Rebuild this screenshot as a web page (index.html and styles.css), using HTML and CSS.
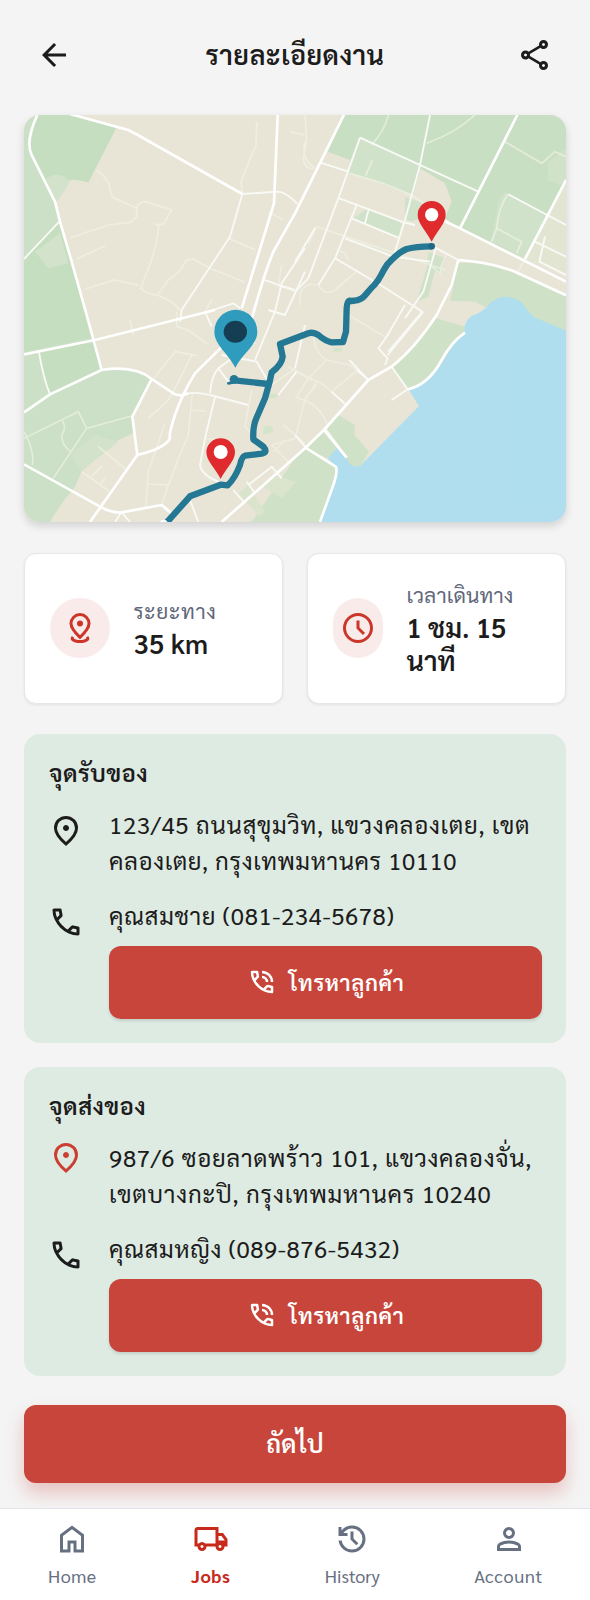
FILE: index.html
```html
<!DOCTYPE html>
<html lang="th">
<head>
<meta charset="utf-8">
<title>รายละเอียดงาน</title>
<link rel="stylesheet" href="styles.css">
</head>
<body>
<svg class="defs" width="0" height="0" aria-hidden="true">
  <symbol id="i-back" viewBox="0 -960 960 960"><path d="m313-440 224 224-57 56-320-320 320-320 57 56-224 224h487v80H313Z"/></symbol>
  <symbol id="i-share" viewBox="0 -960 960 960"><path d="M680-80q-50 0-85-35t-35-85q0-6 3-28L282-392q-16 15-37 23.500t-45 8.500q-50 0-85-35t-35-85q0-50 35-85t85-35q24 0 45 8.500t37 23.500l281-164q-2-7-2.500-13.500T560-760q0-50 35-85t85-35q50 0 85 35t35 85q0 50-35 85t-85 35q-24 0-45-8.500T598-672L317-508q2 7 2.500 13.500t.5 14.500q0 8-.5 14.500T317-452l281 164q16-15 37-23.500t45-8.500q50 0 85 35t35 85q0 50-35 85t-85 35Zm0-80q17 0 28.500-11.500T720-200q0-17-11.500-28.500T680-240q-17 0-28.500 11.500T640-200q0 17 11.500 28.500T680-160ZM200-440q17 0 28.500-11.500T240-480q0-17-11.500-28.500T200-520q-17 0-28.500 11.500T160-480q0 17 11.500 28.500T200-440Zm480-280q17 0 28.500-11.500T720-760q0-17-11.500-28.500T680-800q-17 0-28.500 11.500T640-760q0 17 11.500 28.500T680-720Z"/></symbol>
  <symbol id="i-pin" viewBox="0 -960 960 960"><path d="M480-480q33 0 56.500-23.500T560-560q0-33-23.500-56.500T480-640q-33 0-56.500 23.500T400-560q0 33 23.500 56.500T480-480Zm0 294q122-112 181-203.500T720-552q0-109-69.500-178.500T480-800q-101 0-170.500 69.500T240-552q0 71 59 162.500T480-186Zm0 106Q319-217 239.500-334.500T160-552q0-150 96.500-239T480-880q127 0 223.500 89T800-552q0 100-79.500 217.500T480-80Z"/></symbol>
  <symbol id="i-call" viewBox="0 -960 960 960"><path d="M798-120q-125 0-247-54.500T329-329Q229-429 174.500-551T120-798q0-18 12-30t30-12h162q14 0 25 9.500t13 22.500l26 140q2 16-1 27t-11 19l-97 98q20 37 47.500 71.500T387-386q31 31 65 57.500t72 48.500l94-94q9-9 23.500-13.500T670-390l138 28q14 4 23 14.500t9 23.500v162q0 18-12 30t-30 12ZM241-600l66-66-17-94h-89q5 41 14 81t26 79Zm358 358q39 17 79.500 27t81.500 13v-88l-94-19-67 67Z"/></symbol>
  <symbol id="i-talk" viewBox="0 -960 960 960"><path d="M760-480q0-117-81.500-198.500T480-760v-80q75 0 140.500 28.500t114 77q48.500 48.500 77 114T840-480h-80Zm-160 0q0-50-35-85t-85-35v-80q83 0 141.500 58.500T680-480h-80Z"/><use href="#i-call" x="0" y="-960" width="960" height="960"/></symbol>
  <symbol id="i-distance" viewBox="0 0 36 36"><path d="M18 27.300C12 21.800 9 17.900 9 13.600a9 9 0 0 1 18 0C27 17.900 24 21.800 18 27.300Z" fill="none" stroke="currentColor" stroke-width="3"/><circle cx="18" cy="13.500" r="3"/><path d="M11 26.900c-1.900 2.300 0 3.400 2.600 4.100 2.800.7 6 .7 8.800 0 2.600-.7 4.500-1.800 2.600-4.100" fill="none" stroke="currentColor" stroke-width="3"/></symbol>
  <symbol id="i-clock" viewBox="0 -960 960 960"><path d="m612-292 56-56-148-148v-184h-80v216l172 172ZM480-80q-83 0-156-31.500T197-197q-54-54-85.500-127T80-480q0-83 31.500-156T197-763q54-54 127-85.500T480-880q83 0 156 31.500T763-763q54 54 85.500 127T880-480q0 83-31.500 156T763-197q-54 54-127 85.500T480-80Zm0-80q133 0 226.500-93.500T800-480q0-133-93.500-226.500T480-800q-133 0-226.500 93.500T160-480q0 133 93.500 226.500T480-160Z"/></symbol>
  <symbol id="i-home" viewBox="0 -960 960 960"><path d="M240-200h120v-240h240v240h120v-360L480-740 240-560v360Zm-80 80v-480l320-240 320 240v480H520v-240h-80v240H160Z"/></symbol>
  <symbol id="i-truck" viewBox="0 -960 960 960"><path d="M240-160q-50 0-85-35t-35-85H40v-440q0-33 23.500-56.500T120-800h560v160h120l120 160v200h-80q0 50-35 85t-85 35q-50 0-85-35t-35-85H360q0 50-35 85t-85 35Zm0-80q17 0 28.500-11.500T280-280q0-17-11.500-28.500T240-320q-17 0-28.500 11.500T200-280q0 17 11.500 28.500T240-240ZM120-360h32q17-18 39-29t49-11q27 0 49 11t39 29h272v-360H120v360Zm600 120q17 0 28.500-11.500T760-280q0-17-11.500-28.500T720-320q-17 0-28.500 11.500T680-280q0 17 11.500 28.500T720-240Zm-40-200h170l-90-120h-80v120Z"/></symbol>
  <symbol id="i-history" viewBox="0 -960 960 960"><path d="M480-120q-138 0-240.500-91.500T122-440h82q14 104 92.500 172T480-200q117 0 198.500-81.500T760-480q0-117-81.500-198.500T480-760q-69 0-129 32t-101 88h110v80H120v-240h80v94q51-64 124.500-99T480-840q75 0 140.500 28.500t114 77q48.500 48.500 77 114T840-480q0 75-28.500 140.500t-77 114q-48.500 48.500-114 77T480-120Zm112-192L440-464v-216h80v184l128 128-56 56Z"/></symbol>
  <symbol id="i-person" viewBox="0 -960 960 960"><path d="M480-480q-66 0-113-47t-47-113q0-66 47-113t113-47q66 0 113 47t47 113q0 66-47 113t-113 47ZM160-160v-112q0-34 17.500-62.500T224-378q62-31 126-46.500T480-440q66 0 130 15.500T736-378q29 15 46.500 43.500T800-272v112H160Zm80-80h480v-32q0-11-5.500-20T700-306q-54-27-109-40.500T480-360q-56 0-111 13.500T260-306q-9 5-14.500 14t-5.500 20v32Zm240-320q33 0 56.500-23.500T560-640q0-33-23.500-56.500T480-720q-33 0-56.500 23.500T400-640q0 33 23.500 56.500T480-560Z"/></symbol>
</svg>

<header class="topbar">
  <svg class="icon"><use href="#i-back"/></svg>
  <h1 class="title"><span class="t-title">รายละเอียดงาน</span></h1>
  <svg class="icon"><use href="#i-share"/></svg>
</header>

<main class="content">
  <svg class="map" viewBox="27 30 1626 1221" preserveAspectRatio="none">
    <rect x="27" y="30" width="1626" height="1221" fill="#e8e5d7"/>
    <!-- parks -->
    <path fill="#cbe0c7" d="M27 30H180L303 70 220 232Q190 222 165 225 150 260 120 293L135 350 215 630 260 795Q340 780 412 822L350 933 355 985 300 1010 200 1098 180 1145Q140 1190 105 1251H27Z"/>
    <path fill="#c6dec1" d="M65 30H180L303 70 220 232Q190 222 165 225 130 195 92 222L45 130ZM130 352 27 460V740L233 697ZM75 742 240 708 260 795 105 868Z"/>
    <path fill="#d3e3cb" d="M92 222Q130 195 162 230 150 265 120 293ZM60 440 100 490 160 475 135 385ZM165 1050 240 990 310 1010 200 1098Z"/>
    <path fill="#c8dfc3" d="M988 30H1653V230L1530 462 1335 370 1290 340 1310 290 1290 235 1215 190 1195 270 1100 235 1005 205 1005 165 938 140Z"/>
    <path fill="#d2e2ca" d="M1005 165 1035 100 1215 182 1193 270 1000 200ZM1170 275 1240 300 1230 340 1170 352ZM1430 410 1450 290 1470 260 1500 285 1600 330 1530 462ZM1055 312 1160 350 1150 400 1015 340ZM1240 440 1290 460 1275 505 1235 490ZM1600 170 1653 130V230L1630 240 1598 225Z"/>
    <path fill="#e3e5d3" d="M1600 330 1653 230V510L1530 462Z"/>
    <path fill="#cfe1c6" d="M1330 475Q1420 470 1490 502L1653 571V700H1500L1440 620 1380 590 1305 587ZM1238 480 1260 495 1240 575 1205 590ZM1265 640 1350 665 1352 683 1290 770 1235 840 1180 855 1132 787ZM970 930 1020 960 1018 990 1062 1040 1035 1084 1000 1085 928 978ZM928 978 965 1030 938 1060 875 1032ZM710 1251 840 1060 875 1032 965 1085 915 1251Z"/>
    <path fill="#dbe4cc" d="M735 1140 780 1110 845 1130 800 1180ZM670 1165 700 1140 750 1220 735 1235Z"/>
    <path fill="#d4e4c9" d="M745 965Q775 955 775 980L745 990ZM760 865 790 868 780 880H760ZM955 728H980V740H955Z"/>
    <path fill="#b0deef" d="M1653 677 1555 635Q1535 615 1520 592 1475 560 1430 590 1400 625 1370 632 1342 655 1350 683 1310 720 1290 760 1240 845 1180 853L1212 903 1035 1083Q1005 1090 995 1058L965 1030 938 1060 965 1090 915 1251H1653Z"/>

    <!-- lanes -->
    <g class="lane">
      <path d="M245 195Q280 220 285 250T300 280L365 310Q370 290 392 290L470 315 445 358H420L432 362Q425 430 400 490L377 550Q400 570 427 570L460 525 490 503 515 465 535 462 585 490"/>
      <path d="M165 398 280 360 345 352 365 335V310M185 462 270 422M210 553 295 525 370 540M427 570 470 590 500 620M725 50 723 120 678 230 682 265M640 400 722 435M585 490 690 532M570 620 590 585M868 90 825 80M870 110Q855 160 900 190M870 30 875 100 865 165Q870 190 895 192"/>
      <path d="M27 1000 190 920 215 970 350 933M27 980Q60 1040 52 1080M143 948Q155 970 140 990 140 1020 167 1040M215 970 115 1120M250 1025 335 1095 M200 1100 282 1158M230 1115 262 1082M255 1140 272 1117"/>
      <path d="M485 620V665L520 675 578 718M545 752 480 740 410 828M530 750 480 850 460 885 400 940M532 865 520 990 490 1060 460 1140 440 1200M450 955 400 1100 392 1205M400 1137 463 1140M532 915 575 918M570 1000 610 1005M710 855 690 965 720 995M345 645 355 690"/>
      <path d="M1070 120Q1110 75 1120 30M1235 115Q1320 85 1380 30M1470 110 1580 175 1620 140 1653 155M1478 268Q1450 310 1445 370L1520 410 1505 445M1445 370 1428 412M1052 212 1072 165M1005 205 1105 235 1190 270 1240 305M1170 345 1200 362M880 415 905 365 1290 495M900 368 880 415M1000 465 990 445 965 435M905 540Q870 530 855 565V600M910 540Q930 575 960 555L1030 495"/>
      <path d="M895 683Q895 740 935 765L1005 780 1027 797M840 798 880 820 920 835 990 895M935 765 880 820 845 875M870 880 905 840M1027 797 960 850 950 865M840 878Q910 890 938 960M805 345 760 320M750 525 840 560M800 480 790 540M1000 630 1110 695M840 790 770 840M820 785 905 830 870 885 840 1000 770 1020M775 1040 810 1005M805 960 870 1015M770 1020 820 1070"/>
      <path d="M1590 395 1573 470 1653 510M1240 475 1275 505 1280 480 1295 445M1510 500 1525 470"/>
    </g>
    <!-- streets -->
    <g class="street">
      <path d="M133 350 27 462M682 267 645 395 500 615 495 650M682 267 790 260Q815 262 847 297M545 630 655 595 675 610M72 742Q85 820 105 868M585 865Q590 810 610 790L720 710M610 790 640 830M585 870 700 900M720 765 780 620 800 535 870 430M750 525 790 540 840 555M760 615 810 630 870 500M620 750 725 770 760 830M500 870Q540 855 600 875L570 1000 555 1080Q560 1110 610 1130M570 620 590 665"/>
      <path d="M917 173 1000 200M1035 98 970 280 880 520 840 560M973 280 1160 350M1035 98 1390 260M1245 30 1215 180 1170 345 1135 455M1025 300 960 460 910 540M1062 310 1050 355M1010 340 1155 400M990 400 1135 455M1135 455 1245 470M960 460 1105 545 1222 620 1120 740M1262 430 1225 560 1170 640M1480 268 1653 360M1560 410 1653 455M1255 425 1330 465M1590 395 1573 470 1653 510M840 470 900 370M1155 350 1200 360"/>
      <path d="M1170 600 1115 695 1090 730 1118 760 1110 780M1225 620 1118 750M1130 785 1178 853 1130 885M1003 765 1060 825M1027 797 1060 825M950 860 990 897M930 970 995 1058M845 800 790 870M870 660 840 790M700 1140 770 1085 800 1120M655 1155 690 1195M695 1130 720 1165M525 1185 550 1251M440 1200 460 1220M320 1220 300 1251M320 1222 345 1251M840 990 875 1030"/>
    </g>
    <!-- main roads -->
    <g class="road">
      <path d="M67 30Q30 110 50 150L120 290 135 350 170 470 215 630 260 795"/>
      <path d="M165 27 340 75Q370 90 400 108L682 267"/>
      <path d="M788 30 777 295 680 610M988 27 840 325 775 440Q750 500 712 635L540 805Q500 870 480 930T465 1000Q450 1030 367 1050L225 1251"/>
      <path d="M27 748 240 705 600 615M27 922 105 868 260 795Q360 780 410 822L480 868Q500 875 520 865M410 822 352 935 367 1050M27 1078 255 1205Q290 1225 320 1222L440 1200 470 1225"/>
      <path d="M1507 30 1335 370 1653 530M1335 370 1250 330M1653 225 1530 462M1330 465Q1420 470 1500 500L1653 571M1330 465 1310 540 1265 630Q1200 730 1130 785L1060 825 927 975 870 1030 620 1251M927 975 995 1058M875 1030 962 1085Q970 1095 955 1140L915 1251M1178 853Q1240 840 1280 765 1310 710 1350 683"/>
    </g>
    <!-- route -->
    <g class="route">
      <path d="M1250 424Q1200 425 1175 432 1150 442 1117 478C1095 510 1100 515 1078 540 1050 565 1050 587 1010 588L1003 587Q996 590 995 610L993 680 984 711 950 712Q930 708 910 690 895 680 880 685L795 717Q800 740 803 755 800 780 770 802L764 830 750 880 724 940Q713 965 715 1003L745 1025Q760 1042 740 1046L690 1052Q680 1055 675 1080 660 1120 638 1141L617 1139 525 1174 452 1256"/>
      <path d="M760 837 658 826"/>
    </g>
    <circle cx="1250" cy="424" r="10" fill="#1e6885"/>
    <circle cx="657" cy="823" r="13" fill="#257894"/>
    <path d="M640 835 655 832" stroke="#257894" stroke-width="8" stroke-linecap="round"/>
    <circle cx="446" cy="1256" r="12" fill="#fff"/>
    <!-- pins -->
    <path fill="#2f9cbe" d="M661 788C640 745 598 720 598 680A64 65 0 0 1 727 680C727 720 683 745 661 788Z"/>
    <ellipse cx="661" cy="680" rx="35" ry="33" fill="#153e53"/>
    <path fill="#df2b2d" d="M1250 410C1235 380 1208 355 1208 330A42 42 0 0 1 1292 330C1292 355 1265 380 1250 410Z"/>
    <circle cx="1250" cy="329" r="20" fill="#fff"/>
    <path fill="#df2b2d" d="M617 1122C602 1092 574 1068 574 1042A43 42 0 0 1 660 1042C660 1068 632 1092 617 1122Z"/>
    <circle cx="617" cy="1041" r="21" fill="#fff"/>
  </svg>

  <section class="stats">
    <div class="stat">
      <div class="badge"><svg class="icon"><use href="#i-distance"/></svg></div>
      <div class="stat-text"><div class="label"><span class="t-dist">ระยะทาง</span></div><div class="value"><span class="t-km">35 km</span></div></div>
    </div>
    <div class="stat">
      <div class="badge narrow"><svg class="icon"><use href="#i-clock"/></svg></div>
      <div class="stat-text"><div class="label"><span class="t-time">เวลาเดินทาง</span></div><div class="value"><span class="t-hr">1 ชม. 15</span><br><span class="t-min">นาที</span></div></div>
    </div>
  </section>

  <section class="stop">
    <h2 class="stop-title"><span class="t-pick">จุดรับของ</span></h2>
    <div class="row address">
      <svg class="icon lowered"><use href="#i-pin"/></svg>
      <p class="text"><span class="t-a1">123/45 ถนนสุขุมวิท, แขวงคลองเตย, เขต</span><br><span class="t-a2">คลองเตย, กรุงเทพมหานคร 10110</span></p>
    </div>
    <div class="row contact">
      <svg class="icon lowered"><use href="#i-call"/></svg>
      <div class="body">
        <p class="text"><span class="t-c1">คุณสมชาย (081-234-5678)</span></p>
        <button class="call"><svg class="icon small"><use href="#i-talk"/></svg><span class="t-call">โทรหาลูกค้า</span></button>
      </div>
    </div>
  </section>

  <section class="stop">
    <h2 class="stop-title"><span class="t-drop">จุดส่งของ</span></h2>
    <div class="row address">
      <svg class="icon red"><use href="#i-pin"/></svg>
      <p class="text"><span class="t-b1">987/6 ซอยลาดพร้าว 101, แขวงคลองจั่น,</span><br><span class="t-b2">เขตบางกะปิ, กรุงเทพมหานคร 10240</span></p>
    </div>
    <div class="row contact">
      <svg class="icon lowered"><use href="#i-call"/></svg>
      <div class="body">
        <p class="text"><span class="t-c2">คุณสมหญิง (089-876-5432)</span></p>
        <button class="call"><svg class="icon small"><use href="#i-talk"/></svg><span class="t-call">โทรหาลูกค้า</span></button>
      </div>
    </div>
  </section>

  <button class="next"><span class="t-next">ถัดไป</span></button>
</main>

<nav class="tabs">
  <a class="tab home"><svg class="icon"><use href="#i-home"/></svg><span>Home</span></a>
  <a class="tab jobs active"><svg class="icon"><use href="#i-truck"/></svg><span>Jobs</span></a>
  <a class="tab history"><svg class="icon"><use href="#i-history"/></svg><span>History</span></a>
  <a class="tab account"><svg class="icon"><use href="#i-person"/></svg><span>Account</span></a>
</nav>
</body>
</html>
```

FILE: styles.css
```css
* { box-sizing: border-box; margin: 0; }
body {
  width: 590px;
  height: 1600px;
  display: flex;
  flex-direction: column;
  background: #f4f4f4;
  color: #1c1c1c;
  font-family: Sarabun, "Noto Sans Thai", "Noto Sans", "Open Sans", sans-serif;
  overflow: hidden;
}
.defs { position: absolute; }
.icon { width: 36px; height: 36px; flex: none; fill: currentColor; display: block; }
.icon.small { width: 30px; height: 30px; }
.red { color: #cb3f33; }

.topbar { height: 115px; padding: 0 36px 6px; display: flex; align-items: center; justify-content: space-between; }
.title { font-size: 27px; line-height: 36px; font-weight: 600; padding-bottom: 2px; }

.content { padding: 0 24px; display: flex; flex-direction: column; }
.map { width: 542px; height: 407px; border-radius: 16px; box-shadow: 0 4px 8px rgba(0,0,0,.14); display: block; }
.map path, .map g { stroke-linejoin: round; }
.lane { fill: none; stroke: #f1f4e6; stroke-width: 5; opacity: .65; }
.street { fill: none; stroke: #f9faf5; stroke-width: 5.5; }
.road { fill: none; stroke: #fff; stroke-width: 8; }
.route { fill: none; stroke: #257894; stroke-width: 19; }

.stats { display: grid; grid-template-columns: 1fr 1fr; gap: 24px; margin-top: 31px; }
.stat { height: 151px; padding: 0 24.5px 2px; display: flex; align-items: center; gap: 24px; background: #fff; border: 1.5px solid #e6e7eb; border-radius: 12px; box-shadow: 0 1px 3px rgba(0,0,0,.08); }
.badge { width: 60px; height: 60px; flex: none; border-radius: 30px; background: #f9ebea; color: #cb3629; display: flex; align-items: center; justify-content: center; }
.badge.narrow { width: 50px; }
.label { font-size: 21px; line-height: 30px; color: #5f687a; white-space: nowrap; }
.value { font-size: 27px; line-height: 33px; font-weight: 600; white-space: nowrap; }

.stop { height: 309px; margin-top: 30px; padding: 23px 24px 24px; border-radius: 16px; background: #deebe3; }
.stop + .stop { margin-top: 24px; }
.stop-title { font-size: 24px; line-height: 30px; font-weight: 600; padding-left: 1px; }
.row { display: flex; gap: 25px; }
.address { margin-top: 19px; }
.contact { margin-top: 19px; }
.lowered { margin-top: 7px; }
.address .red { margin-top: 1px; }
.text { font-size: 24px; line-height: 36px; white-space: nowrap; }
.body { flex: 1; }
.call { width: 100%; height: 73px; margin-top: 12.5px; padding: 0; border: 0; border-radius: 12px; background: #c7453a; color: #fff; font: 600 22px/30px Sarabun, "Noto Sans Thai", "Noto Sans", sans-serif; display: flex; align-items: center; justify-content: center; gap: 12px; box-shadow: 0 2px 3px rgba(0,0,0,.12); }
.next { height: 78px; margin-top: 29px; padding: 0 0 2px; border: 0; border-radius: 12px; background: #c7453a; color: #fff; font: 600 25px/36px Sarabun, "Noto Sans Thai", "Noto Sans", sans-serif; box-shadow: 0 10px 18px rgba(199,69,58,.28); }

/* tracking */
.t-title { letter-spacing: .4px; }
.t-dist { letter-spacing: .7px; }
.t-time { letter-spacing: .15px; }
.t-km { letter-spacing: .3px; }
.t-pick, .t-drop { letter-spacing: .4px; }
.t-a1 { letter-spacing: .71px; }
.t-a2 { letter-spacing: .57px; }
.t-b1 { letter-spacing: .68px; }
.t-b2 { letter-spacing: .77px; }
.t-c1 { letter-spacing: .6px; }
.t-c2 { letter-spacing: .55px; }
.t-call { letter-spacing: .6px; }

.tabs { height: 92px; margin-top: auto; padding: 12px 47px 0 48px; display: flex; justify-content: space-between; background: #fff; border-top: 1.5px solid #e3e4ea; position: relative; }
.tab { display: flex; flex-direction: column; align-items: center; color: #677081; font-size: 18px; line-height: 24px; gap: 7px; }
.tab.active { color: #c7291b; font-weight: 700; }
.home, .jobs { letter-spacing: .5px; }
.account { letter-spacing: .7px; }
```
